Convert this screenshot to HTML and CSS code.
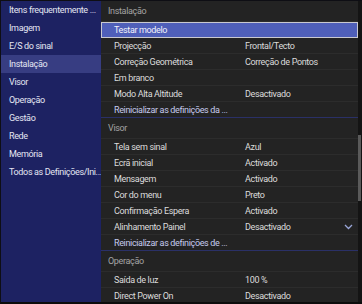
FILE: index.html
```html
<!DOCTYPE html>
<html lang="pt">
<head>
  <meta charset="UTF-8" />
  <title>Menu do projector</title>
  <link rel="stylesheet" href="styles.css">
</head>
<body>
  <div class="screen">

    <!-- Main menu -->
    <ul class="sidebar">
      <li>Itens frequentemente ...</li>
      <li>Imagem</li>
      <li>E/S do sinal</li>
      <li class="active">Instalação</li>
      <li>Visor</li>
      <li>Operação</li>
      <li>Gestão</li>
      <li>Rede</li>
      <li>Memória</li>
      <li>Todos as Definições/Ini...</li>
    </ul>

    <!-- Sub menu -->
    <div class="panel">
      <div class="list">
        <div class="group">Instalação</div>
        <div class="row selected"><span>Testar modelo</span><span></span></div>
        <div class="row"><span>Projecção</span><span>Frontal/Tecto</span></div>
        <div class="row"><span>Correção Geométrica</span><span>Correção de Pontos</span></div>
        <div class="row"><span>Em branco</span><span></span></div>
        <div class="row"><span>Modo Alta Altitude</span><span>Desactivado</span></div>
        <div class="row reset"><span>Reinicializar as definições da ...</span><span></span></div>

        <div class="group">Visor</div>
        <div class="row"><span>Tela sem sinal</span><span>Azul</span></div>
        <div class="row"><span>Ecrã inicial</span><span>Activado</span></div>
        <div class="row"><span>Mensagem</span><span>Activado</span></div>
        <div class="row"><span>Cor do menu</span><span>Preto</span></div>
        <div class="row"><span>Confirmação Espera</span><span>Activado</span></div>
        <div class="row"><span>Alinhamento Painel</span><span>Desactivado</span>
          <svg class="chevron" width="9" height="6" viewBox="0 0 9 6"><path d="M1 1 L4.5 4.5 L8 1" fill="none" stroke="#9aa6d8" stroke-width="1.3"/></svg>
        </div>
        <div class="row reset"><span>Reinicializar as definições de ...</span><span></span></div>

        <div class="group">Operação</div>
        <div class="row"><span>Saída de luz</span><span>100 %</span></div>
        <div class="row"><span>Direct Power On</span><span>Desactivado</span></div>
      </div>

      <div class="scroll">
        <div class="thumb"></div>
      </div>
    </div>

  </div>
</body>
</html>
```

FILE: styles.css
```css
:root {
  --menu-bg: #1d2262;
  --menu-active: #373d82;
  --panel-bg: #232323;
  --line: #2c2c2c;
  --text: #dcdcdc;
}

body {
  margin: 0;
  background: #0c0c0c;
  font-family: Roboto, 'Open Sans', sans-serif;
  font-size: 9px;
  letter-spacing: -0.35px;
}

.screen {
  display: flex;
  width: 362px;
  height: 304px;
  box-sizing: border-box;
  border-top: 1px solid #0e0e14;
  border-left: 1px solid #0e0e14;
  border-bottom: 2px solid #0c0c0c;
  overflow: hidden;
}

.sidebar {
  width: 100px;
  margin: 0;
  padding: 0;
  list-style: none;
  background: var(--menu-bg);
  color: #e4e6f2;
}

.sidebar li {
  height: 18px;
  line-height: 18px;
  padding-left: 8px;
  white-space: nowrap;
  overflow: hidden;
}

.sidebar li.active {
  background: var(--menu-active);
}

.panel {
  flex: 1;
  display: flex;
  background: var(--panel-bg);
}

.list {
  flex: 1;
}

.group {
  height: 21px;
  line-height: 21px;
  padding-left: 7px;
  color: #a4a4a4;
  border-bottom: 1px solid var(--line);
  box-sizing: border-box;
}

.row {
  display: grid;
  grid-template-columns: 131px 1fr 14px;
  align-items: center;
  height: 16px;
  padding-left: 13px;
  color: var(--text);
  border-bottom: 1px solid var(--line);
  box-sizing: border-box;
  white-space: nowrap;
}

.row.selected {
  background: #4f5fb9;
  border: 1px solid #c9c9d0;
  padding-left: 12px;
  color: #f2f2fa;
}

.row.reset {
  color: #c6cbee;
  border-bottom: 1px solid #2a3067;
}

.chevron {
  display: block;
}

.scroll {
  width: 4px;
  background: #141414;
}

.thumb {
  margin-top: 134px;
  width: 3px;
  height: 66px;
  background: #5a5a5a;
}
```
